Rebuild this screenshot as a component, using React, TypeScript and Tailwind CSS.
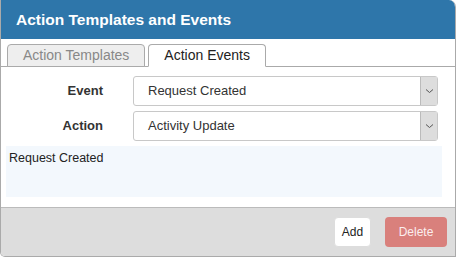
import React from 'react';

function Select({ value }: { value: string }) {
  return (
    <div className="flex h-[30px] w-[305px] items-stretch rounded-[3px] border border-[#c8c8c8] bg-white">
      <span className="flex flex-1 items-center pl-[14px] text-[13px] text-[#333]">{value}</span>
      <span className="flex w-[17px] items-center justify-center border-l border-[#bbb] bg-[#dddddd]">
        <svg width="9" height="6" viewBox="0 0 9 6" fill="none">
          <path d="M1 1.5 L4.5 4.5 L8 1.5" stroke="#555" strokeWidth="1" />
        </svg>
      </span>
    </div>
  );
}

export default function App() {
  return (
    <div className="h-[258px] w-[457px] bg-white font-['Liberation_Sans',Arial,sans-serif]">
      <div className="flex h-[257px] w-[456px] flex-col overflow-hidden rounded-tr-[7px] rounded-bl-[5px] border-r border-b border-l border-[#aaa]">
        <div className="flex h-[39px] shrink-0 items-center bg-[#2e76aa] pl-[15px] text-[15.5px] font-bold text-white">
          Action Templates and Events
        </div>
        <div className="flex h-[28px] shrink-0 items-end gap-[3px] border-b border-[#aaa] pl-[6px] pt-[5px]">
          <div className="-mb-px flex h-[23px] items-center rounded-t-[4px] border border-[#aaa] bg-[#eeeeee] px-[15px] text-[14px] text-[#888]">
            Action Templates
          </div>
          <div className="-mb-px flex h-[23px] items-center rounded-t-[4px] border border-b-white border-[#aaa] bg-white px-[15px] text-[14px] text-[#222]">
            Action Events
          </div>
        </div>
        <div className="flex flex-1 flex-col bg-white px-[5px] pt-[9px]">
          <div className="flex items-center">
            <span className="w-[97px] text-right text-[13px] font-bold text-[#333]">Event</span>
            <span className="w-[30px]" />
            <Select value="Request Created" />
          </div>
          <div className="mt-[5px] flex items-center">
            <span className="w-[97px] text-right text-[13px] font-bold text-[#333]">Action</span>
            <span className="w-[30px]" />
            <Select value="Activity Update" />
          </div>
          <div className="mt-[5px] h-[51px] w-[436px] bg-[#f3f8fd] px-[3px] pt-[3px] text-[12.5px] text-[#222]">
            Request Created
          </div>
        </div>
        <div className="flex h-[49px] shrink-0 items-center justify-end gap-[14px] border-t border-[#bbb] bg-[#dddddd] pr-[8px]">
          <button className="h-[30px] w-[37px] rounded-[4px] border border-[#ddd] bg-white text-[12px] text-[#222]">
            Add
          </button>
          <button className="h-[30px] w-[62px] rounded-[4px] bg-[#d9807c] text-[12px] text-[#fbeeee]">
            Delete
          </button>
        </div>
      </div>
    </div>
  );
}
